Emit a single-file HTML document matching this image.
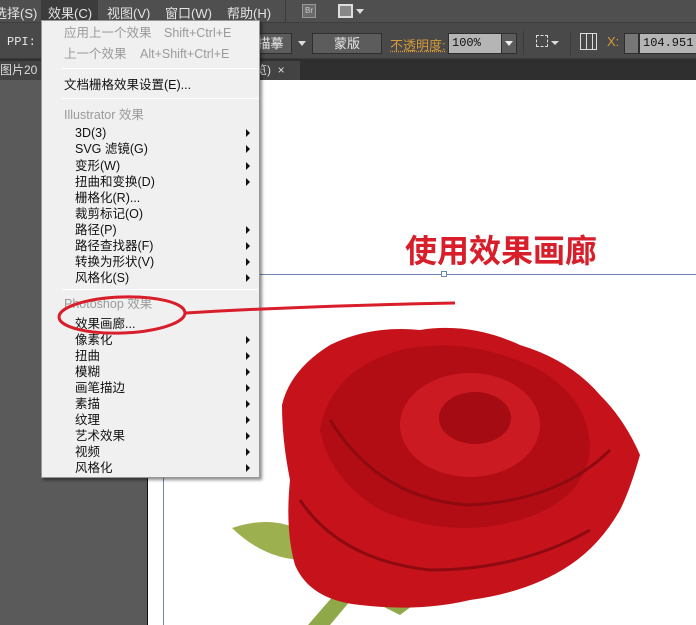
<!DOCTYPE html>
<html><head><meta charset="utf-8"><style>
*{margin:0;padding:0;box-sizing:border-box}
body{width:696px;height:625px;overflow:hidden;position:relative;background:#5a5a5a;font-family:"Liberation Sans","Noto Sans CJK SC",sans-serif;font-size:12px}
.abs{position:absolute}
.menubar{left:0;top:0;width:696px;height:22px;background:#4f4f4f;color:#e4e4e4;font-size:13px}
.menubar span{position:absolute;top:3px}
.opt{left:0;top:22px;width:696px;height:37px;background:#494949;border-top:1px solid #3e3e3e;border-bottom:1px solid #3a3a3a}
.tabs{left:0;top:59px;width:696px;height:21px;background:#2f2f2f}
.btn{position:absolute;background:#5c5c5c;border:1px solid #2e2e2e;color:#e8e8e8;font-size:13px;text-align:center}
.inp{position:absolute;background:#b5b5b5;border:1px solid #2e2e2e;color:#111;font-family:"Liberation Mono","Noto Sans CJK SC",monospace;font-size:12px;padding-left:3px}
.menu{left:41px;top:20px;width:219px;height:458px;background:#f0f0f0;border:1px solid #979797;box-shadow:2px 2px 3px rgba(0,0,0,.45);color:#111;font-size:12.5px}
.mi{position:absolute;left:33px;line-height:16px;white-space:nowrap}
.dis{color:#9a9a9a}
.arr{position:absolute;left:204px;width:0;height:0;border-left:4px solid #111;border-top:4px solid transparent;border-bottom:4px solid transparent}
.sep{position:absolute;left:20px;width:196px;height:1px;background:#a8a8a8;border-bottom:1px solid #fff}
</style></head><body>
<div class="abs menubar">
<span style="left:-6px">选择(S)</span>
<div class="abs" style="left:41px;top:0;width:57px;height:22px;background:#3c3c3c"></div>
<span style="left:48px">效果(C)</span>
<span style="left:107px">视图(V)</span>
<span style="left:165px">窗口(W)</span>
<span style="left:227px">帮助(H)</span>
<div class="abs" style="left:285px;top:0;width:1px;height:22px;background:#3a3a3a"></div>
<div class="abs" style="left:302px;top:4px;width:14px;height:14px;background:#6a6a6a;border:1px solid #999;font-size:8px;color:#ccc;line-height:12px;text-align:center">Br</div>
<div class="abs" style="left:338px;top:4px;width:15px;height:14px;border:2px solid #ddd;background:#888"></div>
<div class="abs" style="left:356px;top:9px;border-top:5px solid #ddd;border-left:4px solid transparent;border-right:4px solid transparent"></div>
</div>
<div class="abs opt">
<span class="abs" style="left:7px;top:12px;color:#e8e8e8;font-family:'Liberation Mono',monospace;font-size:12px">PPI: 7</span>
<div class="btn" style="left:250px;top:10px;width:42px;height:21px;line-height:19px;border-left:none">描摹</div>
<div class="abs" style="left:298px;top:18px;border-top:5px solid #ddd;border-left:4px solid transparent;border-right:4px solid transparent"></div>
<div class="btn" style="left:312px;top:10px;width:70px;height:21px;line-height:19px">蒙版</div>
<span class="abs" style="left:390px;top:12px;color:#d59a3a;font-size:13px;text-decoration:underline dotted">不透明度:</span>
<div class="inp" style="left:448px;top:10px;width:54px;height:21px;line-height:19px">100%</div>
<div class="btn" style="left:501px;top:10px;width:16px;height:21px"><div class="abs" style="left:3px;top:7px;border-top:5px solid #eee;border-left:4px solid transparent;border-right:4px solid transparent"></div></div>
<div class="abs" style="left:523px;top:8px;width:1px;height:24px;background:#3a3a3a"></div>
<div class="abs" style="left:536px;top:12px;width:12px;height:12px;border:1px dashed #ddd"></div>
<div class="abs" style="left:551px;top:18px;border-top:4px solid #ddd;border-left:4px solid transparent;border-right:4px solid transparent"></div>
<div class="abs" style="left:570px;top:8px;width:1px;height:24px;background:#3a3a3a"></div>
<div class="abs" style="left:580px;top:10px;width:17px;height:17px;border:1px solid #ddd;background:repeating-linear-gradient(90deg,transparent 0 5px,#ddd 5px 6px)"></div>
<span class="abs" style="left:607px;top:11px;color:#d59a3a;font-size:13px">X:</span>
<div class="btn" style="left:624px;top:10px;width:15px;height:21px;background:#777"></div>
<div class="inp" style="left:639px;top:10px;width:60px;height:21px;line-height:19px">104.951</div>
</div>
<div class="abs tabs">
<div class="abs" style="left:0;top:2px;width:42px;height:19px;background:#434343;color:#ddd;font-size:12px;line-height:18px">图片20</div>
<div class="abs" style="left:255px;top:2px;width:45px;height:19px;background:#434343;color:#ddd;font-size:12px;line-height:18px">览) &nbsp;×</div>
</div>
<div class="abs" style="left:147px;top:80px;width:1px;height:545px;background:#111"></div>
<div class="abs" style="left:148px;top:80px;width:548px;height:545px;background:#fff"></div>
<div class="abs" style="left:163px;top:80px;width:1px;height:545px;background:#6d84b4"></div>
<div class="abs" style="left:163px;top:274px;width:533px;height:1px;background:#6d84b4"></div>
<div class="abs" style="left:441px;top:271px;width:6px;height:6px;border:1px solid #6d84b4;background:#fff"></div>
<div class="abs" style="left:405px;top:226px;color:#d81e2a;font-size:32px;font-weight:bold;letter-spacing:0px">使用效果画廊</div>
<svg class="abs" style="left:0;top:0" width="696" height="625">
<path d="M232 528 Q270 515 300 530 L305 560 Q265 560 232 528Z" fill="#9cb050"/>
<path d="M308 625 L340 588 L356 594 L330 625Z" fill="#8fa84a"/>
<path d="M370 600 Q395 585 420 600 L400 615 Z" fill="#8fa84a"/>
<path d="M282 405 Q290 370 330 345 Q370 325 420 330 Q470 322 520 345 Q570 360 600 395 Q625 420 640 455 Q630 490 620 510 Q600 545 570 565 Q530 592 470 600 Q420 612 360 605 Q310 600 295 565 Q285 530 290 480 Q282 440 282 405Z" fill="#c6131b"/>
<path d="M320 430 Q330 370 400 350 Q470 335 540 370 Q590 400 590 450 Q585 500 520 520 Q450 540 380 510 Q330 480 320 430Z" fill="#b20d15"/>
<ellipse cx="470" cy="425" rx="70" ry="52" fill="#cc1a22"/>
<ellipse cx="475" cy="418" rx="36" ry="26" fill="#a50b12"/>
<path d="M300 500 Q340 560 430 570 Q520 570 590 530" stroke="#8e0a10" stroke-width="3" fill="none"/>
<path d="M330 420 Q380 500 470 505 Q560 500 610 450" stroke="#8e0a10" stroke-width="3" fill="none"/>
</svg>
<div class="abs menu">
<div class="mi dis" style="top:4px;left:22px">应用上一个效果</div><div class="mi dis" style="top:4px;left:122px">Shift+Ctrl+E</div>
<div class="mi dis" style="top:25px;left:22px">上一个效果</div><div class="mi dis" style="top:25px;left:98px">Alt+Shift+Ctrl+E</div>
<div class="sep" style="top:47px"></div>
<div class="mi" style="top:56px;left:22px">文档栅格效果设置(E)...</div>
<div class="sep" style="top:77px"></div>
<div class="mi dis" style="top:86px;left:22px">Illustrator 效果</div>
<div class="mi" style="top:104px">3D(3)</div><div class="arr" style="top:108px"></div>
<div class="mi" style="top:120px">SVG 滤镜(G)</div><div class="arr" style="top:124px"></div>
<div class="mi" style="top:137px">变形(W)</div><div class="arr" style="top:141px"></div>
<div class="mi" style="top:153px">扭曲和变换(D)</div><div class="arr" style="top:157px"></div>
<div class="mi" style="top:169px">栅格化(R)...</div>
<div class="mi" style="top:185px">裁剪标记(O)</div>
<div class="mi" style="top:201px">路径(P)</div><div class="arr" style="top:205px"></div>
<div class="mi" style="top:217px">路径查找器(F)</div><div class="arr" style="top:221px"></div>
<div class="mi" style="top:233px">转换为形状(V)</div><div class="arr" style="top:237px"></div>
<div class="mi" style="top:249px">风格化(S)</div><div class="arr" style="top:253px"></div>
<div class="sep" style="top:268px"></div>
<div class="mi dis" style="top:275px;left:22px">Photoshop 效果</div>
<div class="mi" style="top:295px">效果画廊...</div>
<div class="mi" style="top:311px">像素化</div><div class="arr" style="top:315px"></div>
<div class="mi" style="top:327px">扭曲</div><div class="arr" style="top:331px"></div>
<div class="mi" style="top:343px">模糊</div><div class="arr" style="top:347px"></div>
<div class="mi" style="top:359px">画笔描边</div><div class="arr" style="top:363px"></div>
<div class="mi" style="top:375px">素描</div><div class="arr" style="top:379px"></div>
<div class="mi" style="top:391px">纹理</div><div class="arr" style="top:395px"></div>
<div class="mi" style="top:407px">艺术效果</div><div class="arr" style="top:411px"></div>
<div class="mi" style="top:423px">视频</div><div class="arr" style="top:427px"></div>
<div class="mi" style="top:439px">风格化</div><div class="arr" style="top:443px"></div>
</div>
<svg class="abs" style="left:0;top:0" width="696" height="625">
<ellipse cx="122" cy="315" rx="63" ry="18" fill="none" stroke="#d81e2a" stroke-width="3" transform="rotate(-2 122 315)"/>
<path d="M186 313 Q300 306 455 303" stroke="#d81e2a" stroke-width="3" fill="none"/>
</svg>
</body></html>
